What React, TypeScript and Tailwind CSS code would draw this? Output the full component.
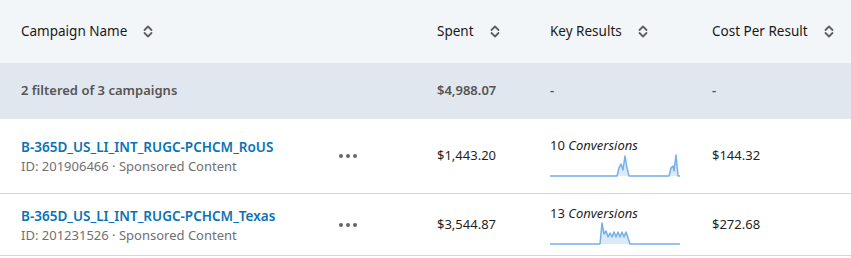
import React from 'react';

const cols = 'grid grid-cols-[316px_100px_113px_162px_1fr] items-center pl-[21px]';

function SortIcon() {
  return (
    <svg width="10" height="13" viewBox="0 0 10 13" fill="none" stroke="#5f5f5f" strokeWidth="1.8" strokeLinecap="round" strokeLinejoin="round">
      <path d="M1.5 5 L5 1.5 L8.5 5" />
      <path d="M1.5 8 L5 11.5 L8.5 8" />
    </svg>
  );
}

function HeaderCell({ label }: { label: string }) {
  return (
    <div className="flex items-center gap-4">
      <span>{label}</span>
      <SortIcon />
    </div>
  );
}

function Sparkline({ points }: { points: [number, number][] }) {
  const line = points.map(([x, y], i) => `${i === 0 ? 'M' : 'L'}${x} ${y}`).join(' ');
  return (
    <svg width="130" height="23" viewBox="0 0 130 23" className="block">
      <path d={`${line} L130 22 L0 22 Z`} fill="#dbeaf9" stroke="none" />
      <path d={line} fill="none" stroke="#73b0e8" strokeWidth="1.5" strokeLinejoin="round" />
    </svg>
  );
}

const rows = [
  {
    name: 'B-365D_US_LI_INT_RUGC-PCHCM_RoUS',
    id: '201906466',
    spent: '$1,443.20',
    conv: '10',
    cpr: '$144.32',
    h: 'h-[75px]',
    points: [
      [0, 22], [67, 22], [69, 14], [71, 10], [73, 16], [75, 2], [77, 14], [79, 22],
      [119, 22], [121, 14], [123, 12], [124, 17], [126, 1], [128, 22], [130, 22],
    ] as [number, number][],
  },
  {
    name: 'B-365D_US_LI_INT_RUGC-PCHCM_Texas',
    id: '201231526',
    spent: '$3,544.87',
    conv: '13',
    cpr: '$272.68',
    h: 'h-[62px]',
    points: [
      [0, 22], [50, 22], [52, 1], [54, 12], [56, 9], [58, 15], [60, 11], [62, 15], [64, 10],
      [66, 15], [68, 10], [70, 15], [72, 10], [74, 15], [76, 10], [78, 16], [80, 22], [130, 22],
    ] as [number, number][],
  },
];

export default function App() {
  return (
    <div className="w-[851px] h-[258px] overflow-hidden bg-white text-[13px] text-[#1f1f1f] font-['Segoe_UI','Noto_Sans',sans-serif]">
      <div className={`${cols} h-[63px] bg-[#f3f6f8] text-[13.5px] text-[#191919]`}>
        <HeaderCell label="Campaign Name" />
        <div />
        <HeaderCell label="Spent" />
        <HeaderCell label="Key Results" />
        <HeaderCell label="Cost Per Result" />
      </div>
      <div className={`${cols} h-[56px] bg-[#e1e7ee] font-semibold text-[#555]`}>
        <div>2 filtered of 3 campaigns</div>
        <div />
        <div>$4,988.07</div>
        <div>-</div>
        <div>-</div>
      </div>
      {rows.map((r) => (
        <div key={r.id} className={`${cols} ${r.h} border-b border-[#d6d6d6]`}>
          <div className="flex flex-col leading-[19px] pt-[2px]">
            <span className="text-[#0a72b5] font-semibold text-[13.5px]">{r.name}</span>
            <span className="text-[#707070]">ID: {r.id} · Sponsored Content</span>
          </div>
          <div className="flex gap-[3px] pl-[2px]">
            <span className="w-[4px] h-[4px] rounded-full bg-[#666]" />
            <span className="w-[4px] h-[4px] rounded-full bg-[#666]" />
            <span className="w-[4px] h-[4px] rounded-full bg-[#666]" />
          </div>
          <div>{r.spent}</div>
          <div className="flex flex-col">
            <span className="leading-[18px]">
              {r.conv} <i>Conversions</i>
            </span>
            <Sparkline points={r.points} />
          </div>
          <div>{r.cpr}</div>
        </div>
      ))}
    </div>
  );
}
